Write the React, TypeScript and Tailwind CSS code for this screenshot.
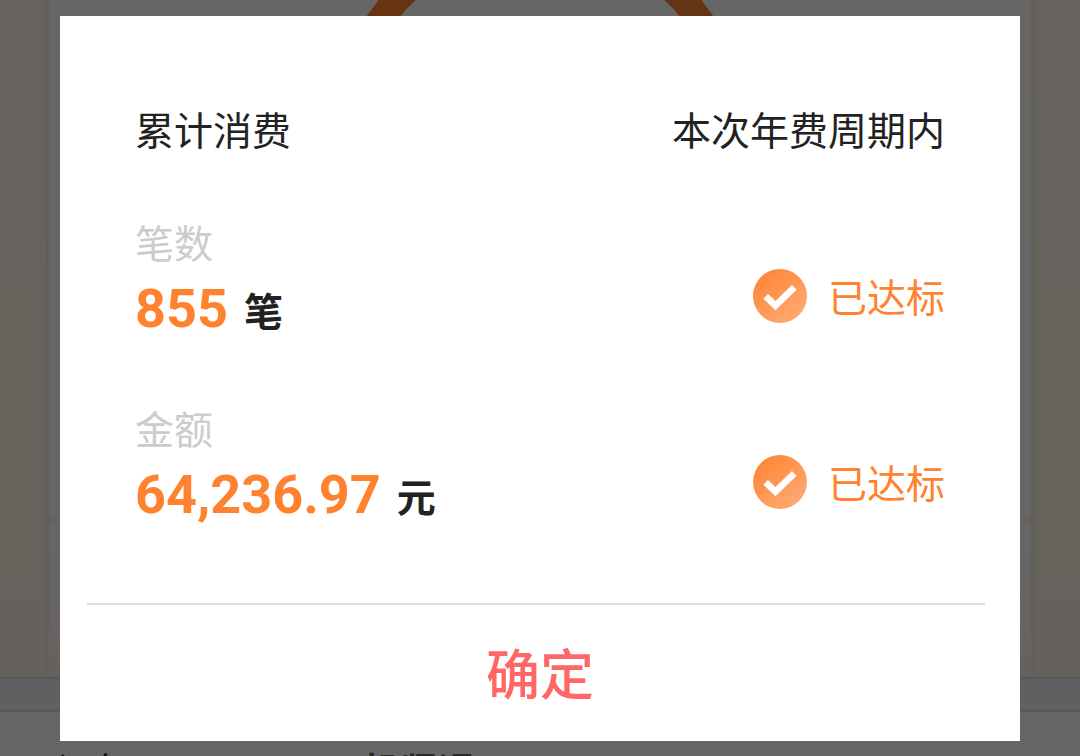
import { useId } from "react";

function CheckBadge() {
  const id = useId();
  return (
    <svg viewBox="0 0 54 54" className="size-[54px]" aria-hidden="true">
      <defs>
        <linearGradient id={id} x1="0.15" y1="0.1" x2="0.85" y2="1">
          <stop offset="0" stopColor="#ff8636" />
          <stop offset="1" stopColor="#ffac78" />
        </linearGradient>
      </defs>
      <circle cx="27" cy="27" r="27" fill={`url(#${id})`} />
      <path d="M12.7 27.3 22.5 36.7 41.3 18.3" fill="none" stroke="#fff" strokeWidth="6.6" />
    </svg>
  );
}

function Metric({ label, value, unit }: { label: string; value: string; unit: string }) {
  return (
    <div className="flex items-center justify-between">
      <dl>
        <dt className="text-[39px] leading-[56px] text-[#cccccc]">{label}</dt>
        <dd className="mt-[5px] flex items-center gap-4 font-bold leading-[70px]">
          <span className="font-['Roboto',sans-serif] text-[54px] leading-[70px] text-[#ff822e]">{value}</span>
          <span className="text-[39px] leading-[70px]">{unit}</span>
        </dd>
      </dl>
      <p className="flex items-center gap-[21px] pt-[35px] text-[39px] leading-[56px] text-[#ff822e]">
        <CheckBadge />
        <span className="pb-[2px]">已达标</span>
      </p>
    </div>
  );
}

function Backdrop() {
  return (
    <div className="bg-[#666666]">
      <div className="bg-linear-to-b from-[#67625e] via-[#66635c] via-75% to-[#66605c] px-[45px]">
        <div className="border-x-4 border-[#625e5a] bg-linear-to-b from-[#666666] from-80% to-[#66615f]">
          <div className="flex h-[521px] justify-center overflow-hidden border-b-2 border-[#6a5c52]">
            <svg viewBox="0 0 420 345" className="h-[345px] w-[420px]" aria-hidden="true">
              <circle cx="210" cy="133" r="195.5" fill="none" stroke="#663413" strokeWidth="27" />
            </svg>
          </div>
          <div className="h-[156px]" />
        </div>
      </div>
      <div className="h-[35px] border-y-2 border-[#57565a] bg-[#606063]" />
      <div className="flex pt-[29px] text-[38px] leading-[56px]">
        <span className="w-[362px] pl-[56px] text-[#111111]">记年</span>
        <span className="font-bold text-[#292929]">机紧退</span>
      </div>
    </div>
  );
}

export default function App() {
  return (
    <main className="relative h-screen overflow-hidden bg-[#666666] font-['Noto_Sans_CJK_SC',sans-serif] text-[#222222]">
      <Backdrop />
      <div className="absolute inset-0 flex items-center justify-center px-[60px]">
        <section role="dialog" aria-modal="true" aria-label="累计消费" className="w-full bg-white">
          <div className="flex flex-col gap-[55px] px-[75px] pt-[84px] pb-[73px]">
            <header className="flex justify-between pb-[2px] text-[39px] leading-[56px]">
              <h2>累计消费</h2>
              <p>本次年费周期内</p>
            </header>
            <Metric label="笔数" value="855" unit="笔" />
            <Metric label="金额" value="64,236.97" unit="元" />
          </div>
          <hr className="mr-[35px] ml-[27px] border-t-2 border-[#dcdcdc]" />
          <button type="button" className="block w-full pt-[27px] pb-[29px] text-center text-[54px] leading-[80px] font-medium text-[#ff6666]">
            确定
          </button>
        </section>
      </div>
    </main>
  );
}
